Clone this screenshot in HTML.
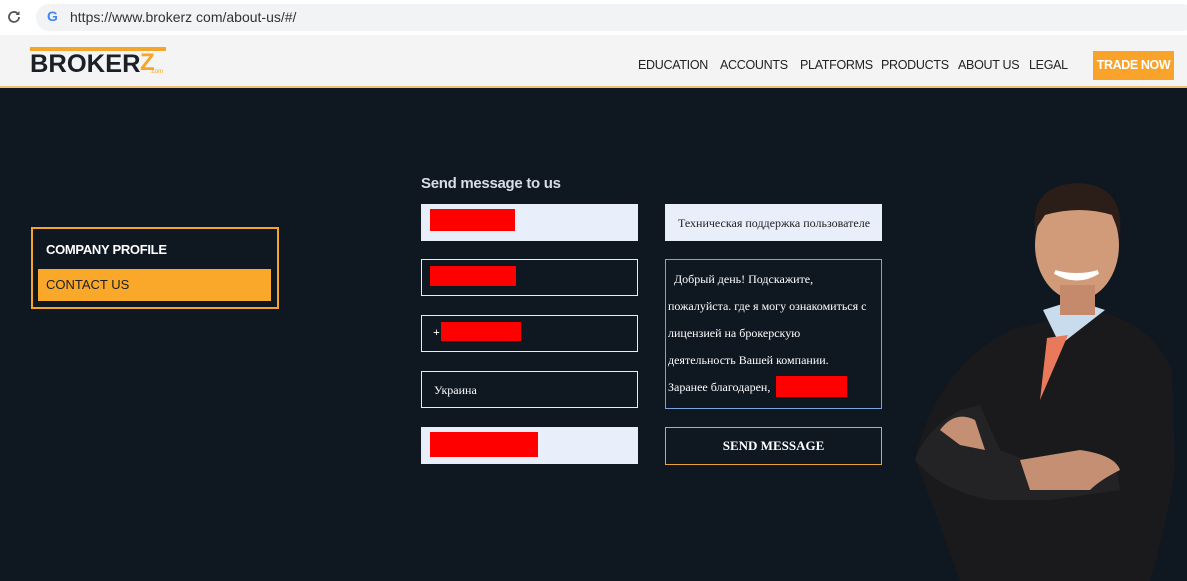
<!DOCTYPE html>
<html><head><meta charset="utf-8"><style>
*{margin:0;padding:0;box-sizing:border-box}
body{width:1187px;height:581px;overflow:hidden;background:#0f1721;font-family:"Liberation Sans",sans-serif;position:relative}
.bar{position:absolute;left:0;top:0;width:1187px;height:35px;background:#fff}
.url{position:absolute;left:36px;top:4px;width:1160px;height:27px;background:#f1f3f4;border-radius:14px}
.hdr{position:absolute;left:0;top:35px;width:1187px;height:53px;background:#f4f4f5;border-bottom:2px solid #f0c070}
.nav{position:absolute;top:58px;font-size:12.5px;color:#222;letter-spacing:-0.3px}
.abs{position:absolute}
.inp{position:absolute;width:217px;height:37px;border:1px solid #e8ecf5}
.light{background:#e8eefa}
.red{position:absolute;background:#ff0000}
.ser{font-family:"Liberation Serif",serif;color:#fff;font-size:12px}
</style></head><body>
<div class="bar"></div>
<div class="url"></div>
<svg class="abs" style="left:6px;top:9px" width="16" height="16" viewBox="0 0 16 16"><path d="M13 8a5 5 0 1 1-1.5-3.6" fill="none" stroke="#555" stroke-width="1.8"/><path d="M13.5 2v4h-4z" fill="#555"/></svg>
<div class="abs" style="left:47px;top:8px;font-weight:bold;font-size:14px;color:#4285f4">G</div>
<div class="abs" style="left:70px;top:9px;font-size:14px;color:#333">https://www.brokerz com/about-us/#/</div>
<div class="hdr"></div>
<div class="abs" style="left:30px;top:47px;width:136px;height:4px;background:#f4a62a"></div>
<div class="abs" style="left:30px;top:50px;font-weight:900;font-size:25px;color:#1b1f26;letter-spacing:0px;transform:scaleX(1.02);transform-origin:left">BROKER</div>
<div class="abs" style="left:140px;top:49px;font-weight:900;font-size:24px;color:#f4a62a">Z</div>
<div class="abs" style="left:150px;top:69px;font-size:6px;color:#f4a62a">.com</div>
<div class="nav" style="left:638px">EDUCATION</div>
<div class="nav" style="left:720px">ACCOUNTS</div>
<div class="nav" style="left:800px">PLATFORMS</div>
<div class="nav" style="left:881px">PRODUCTS</div>
<div class="nav" style="left:958px">ABOUT US</div>
<div class="nav" style="left:1029px">LEGAL</div>
<div class="abs" style="left:1093px;top:51px;width:81px;height:29px;background:#f9a32a;color:#fff;font-weight:bold;font-size:12.5px;letter-spacing:-0.4px;line-height:29px;text-align:center">TRADE NOW</div>

<div class="abs" style="left:31px;top:227px;width:248px;height:82px;border:2px solid #f4a62a"></div>
<div class="abs" style="left:46px;top:242px;color:#fff;font-weight:bold;font-size:13px;letter-spacing:-0.3px">COMPANY PROFILE</div>
<div class="abs" style="left:38px;top:269px;width:233px;height:32px;background:#f9a82a;color:#1b1f26;font-size:13px;line-height:32px;padding-left:8px">CONTACT US</div>

<div class="abs" style="left:421px;top:175px;color:#d8dde5;font-weight:bold;font-size:15px;letter-spacing:-0.3px">Send message to us</div>
<div class="inp light" style="left:421px;top:204px"></div><div class="red" style="left:430px;top:209px;width:85px;height:22px"></div>
<div class="inp" style="left:421px;top:259px"></div><div class="red" style="left:430px;top:266px;width:86px;height:20px"></div>
<div class="inp" style="left:421px;top:315px"></div><div class="abs ser" style="left:433px;top:325px;font-weight:bold">+</div><div class="red" style="left:441px;top:322px;width:80px;height:19px"></div>
<div class="inp" style="left:421px;top:371px"></div><div class="abs ser" style="left:434px;top:383px">Украина</div>
<div class="inp light" style="left:421px;top:427px"></div><div class="red" style="left:430px;top:432px;width:108px;height:25px"></div>

<div class="inp light" style="left:665px;top:204px;height:37px;overflow:hidden"><div class="ser" style="color:#222;position:absolute;left:12px;top:11px;white-space:nowrap">Техническая поддержка пользователе</div></div>
<div class="abs" style="left:665px;top:259px;width:217px;height:150px;border:1px solid #7aa3e0"></div>
<div class="abs ser" style="left:668px;top:266px;line-height:27px;width:214px">&nbsp;&nbsp;Добрый день! Подскажите,<br>пожалуйста. где я могу ознакомиться с<br>лицензией на брокерскую<br>деятельность Вашей компании.<br>Заранее благодарен,</div>
<div class="red" style="left:776px;top:376px;width:71px;height:21px"></div>
<div class="abs" style="left:665px;top:427px;width:217px;height:38px;border:1px solid #e8a43a;color:#fff;font-family:'Liberation Serif',serif;font-weight:bold;font-size:13px;line-height:36px;text-align:center">SEND MESSAGE</div>

<svg class="abs" style="left:900px;top:170px" width="287" height="411" viewBox="0 0 287 411">
<path d="M15 290 Q35 200 110 160 L150 150 L190 140 Q250 150 272 200 L275 300 Q265 360 250 411 L60 411 Q35 340 15 290Z" fill="#1a1a1c"/>
<path d="M143 140 L175 130 L205 140 L160 175Z" fill="#c9dced"/>
<path d="M147 168 L168 165 L140 230 Z" fill="#e8795a"/>
<path d="M15 290 Q25 260 60 240 L80 235 L100 280 L150 300 L215 290 L220 320 L150 330 L90 330 Q40 320 15 290Z" fill="#232325"/>
<path d="M40 260 Q55 240 75 250 L85 280 L60 275Z" fill="#c58f73"/>
<path d="M120 290 L180 280 Q215 285 220 300 Q200 310 190 320 L130 320Z" fill="#c58f73"/>
<ellipse cx="177" cy="75" rx="42" ry="55" fill="#d19b7a"/>
<path d="M135 60 Q130 15 178 13 Q225 15 220 65 L212 45 Q180 35 145 45Z" fill="#2b1d17"/>
<path d="M155 102 Q177 115 198 102 Q177 108 155 102Z" fill="#fff" stroke="#fff" stroke-width="4"/>
<path d="M160 115 L160 145 L195 145 L195 115Z" fill="#c58a6b"/>
</svg>
</body></html>
